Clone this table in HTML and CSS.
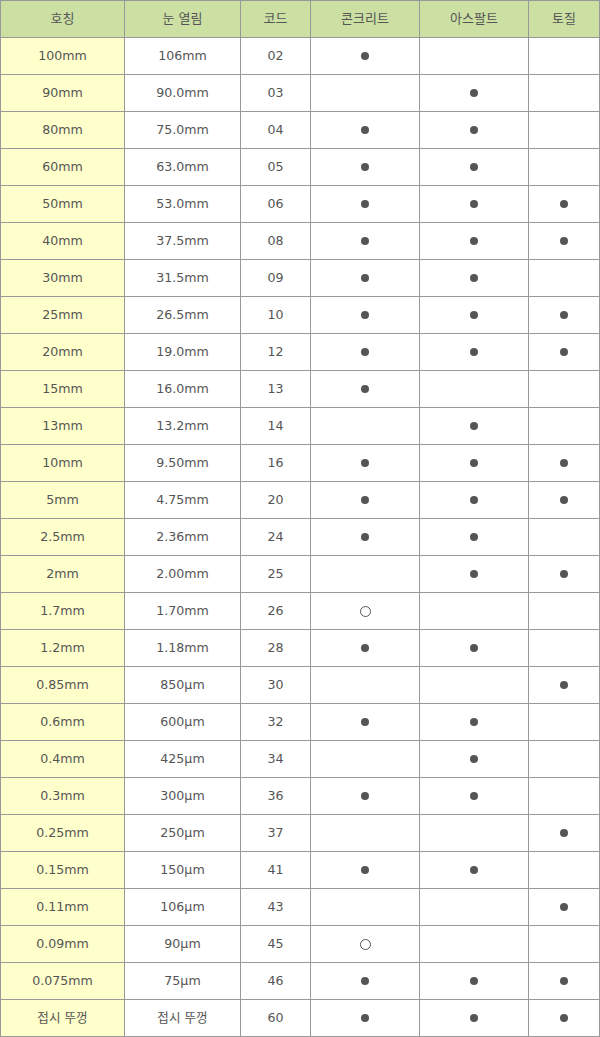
FILE: index.html
```html
<!DOCTYPE html>
<html lang="ko">
<head>
<meta charset="utf-8">
<link rel="stylesheet" href="styles.css">
</head>
<body>
<table class="sieve">
<thead>
<tr><th class="c1">호칭</th><th class="c2">눈 열림</th><th class="c3">코드</th><th class="c4">콘크리트</th><th class="c5">아스팔트</th><th class="c6">토질</th></tr>
</thead>
<tbody>
<tr><td class="name">100mm</td><td>106mm</td><td>02</td><td><span class="dot"></span></td><td></td><td></td></tr>
<tr><td class="name">90mm</td><td>90.0mm</td><td>03</td><td></td><td><span class="dot"></span></td><td></td></tr>
<tr><td class="name">80mm</td><td>75.0mm</td><td>04</td><td><span class="dot"></span></td><td><span class="dot"></span></td><td></td></tr>
<tr><td class="name">60mm</td><td>63.0mm</td><td>05</td><td><span class="dot"></span></td><td><span class="dot"></span></td><td></td></tr>
<tr><td class="name">50mm</td><td>53.0mm</td><td>06</td><td><span class="dot"></span></td><td><span class="dot"></span></td><td><span class="dot"></span></td></tr>
<tr><td class="name">40mm</td><td>37.5mm</td><td>08</td><td><span class="dot"></span></td><td><span class="dot"></span></td><td><span class="dot"></span></td></tr>
<tr><td class="name">30mm</td><td>31.5mm</td><td>09</td><td><span class="dot"></span></td><td><span class="dot"></span></td><td></td></tr>
<tr><td class="name">25mm</td><td>26.5mm</td><td>10</td><td><span class="dot"></span></td><td><span class="dot"></span></td><td><span class="dot"></span></td></tr>
<tr><td class="name">20mm</td><td>19.0mm</td><td>12</td><td><span class="dot"></span></td><td><span class="dot"></span></td><td><span class="dot"></span></td></tr>
<tr><td class="name">15mm</td><td>16.0mm</td><td>13</td><td><span class="dot"></span></td><td></td><td></td></tr>
<tr><td class="name">13mm</td><td>13.2mm</td><td>14</td><td></td><td><span class="dot"></span></td><td></td></tr>
<tr><td class="name">10mm</td><td>9.50mm</td><td>16</td><td><span class="dot"></span></td><td><span class="dot"></span></td><td><span class="dot"></span></td></tr>
<tr><td class="name">5mm</td><td>4.75mm</td><td>20</td><td><span class="dot"></span></td><td><span class="dot"></span></td><td><span class="dot"></span></td></tr>
<tr><td class="name">2.5mm</td><td>2.36mm</td><td>24</td><td><span class="dot"></span></td><td><span class="dot"></span></td><td></td></tr>
<tr><td class="name">2mm</td><td>2.00mm</td><td>25</td><td></td><td><span class="dot"></span></td><td><span class="dot"></span></td></tr>
<tr><td class="name">1.7mm</td><td>1.70mm</td><td>26</td><td><span class="ring"></span></td><td></td><td></td></tr>
<tr><td class="name">1.2mm</td><td>1.18mm</td><td>28</td><td><span class="dot"></span></td><td><span class="dot"></span></td><td></td></tr>
<tr><td class="name">0.85mm</td><td>850µm</td><td>30</td><td></td><td></td><td><span class="dot"></span></td></tr>
<tr><td class="name">0.6mm</td><td>600µm</td><td>32</td><td><span class="dot"></span></td><td><span class="dot"></span></td><td></td></tr>
<tr><td class="name">0.4mm</td><td>425µm</td><td>34</td><td></td><td><span class="dot"></span></td><td></td></tr>
<tr><td class="name">0.3mm</td><td>300µm</td><td>36</td><td><span class="dot"></span></td><td><span class="dot"></span></td><td></td></tr>
<tr><td class="name">0.25mm</td><td>250µm</td><td>37</td><td></td><td></td><td><span class="dot"></span></td></tr>
<tr><td class="name">0.15mm</td><td>150µm</td><td>41</td><td><span class="dot"></span></td><td><span class="dot"></span></td><td></td></tr>
<tr><td class="name">0.11mm</td><td>106µm</td><td>43</td><td></td><td></td><td><span class="dot"></span></td></tr>
<tr><td class="name">0.09mm</td><td>90µm</td><td>45</td><td><span class="ring"></span></td><td></td><td></td></tr>
<tr><td class="name">0.075mm</td><td>75µm</td><td>46</td><td><span class="dot"></span></td><td><span class="dot"></span></td><td><span class="dot"></span></td></tr>
<tr><td class="name">접시 뚜껑</td><td>접시 뚜껑</td><td>60</td><td><span class="dot"></span></td><td><span class="dot"></span></td><td><span class="dot"></span></td></tr>
</tbody>
</table>
</body>
</html>
```
FILE: styles.css
```css
html, body {
  margin: 0;
  padding: 0;
  background: #fff;
}
.sieve {
  border-collapse: separate;
  border-spacing: 0;
  table-layout: fixed;
  width: 600px;
  border-top: 1px solid #999;
  border-left: 1px solid #999;
  font-family: "DejaVu Sans", "Noto Sans CJK KR", sans-serif;
  font-size: 12.6px;
  color: #555;
}
.sieve th, .sieve td {
  border-right: 1px solid #999;
  border-bottom: 1px solid #999;
  height: 37px;
  padding: 0;
  box-sizing: border-box;
  text-align: center;
  vertical-align: middle;
  line-height: 16px;
}
.c1 { width: 124px; }
.c2 { width: 116px; }
.c3 { width: 70px; }
.c4 { width: 109px; }
.c5 { width: 109px; }
.c6 { width: 71px; }
.sieve th {
  background: #cce0a4;
  font-weight: normal;
  font-size: 13px;
  color: #555;
}
.sieve td.name {
  background: #ffffcc;
}
.dot, .ring {
  display: block;
  margin: 0 auto;
  border-radius: 50%;
  box-sizing: border-box;
}
.dot {
  width: 8px;
  height: 8px;
  background: #555;
}
.ring {
  width: 11px;
  height: 11px;
  border: 1px solid #555;
}
```
